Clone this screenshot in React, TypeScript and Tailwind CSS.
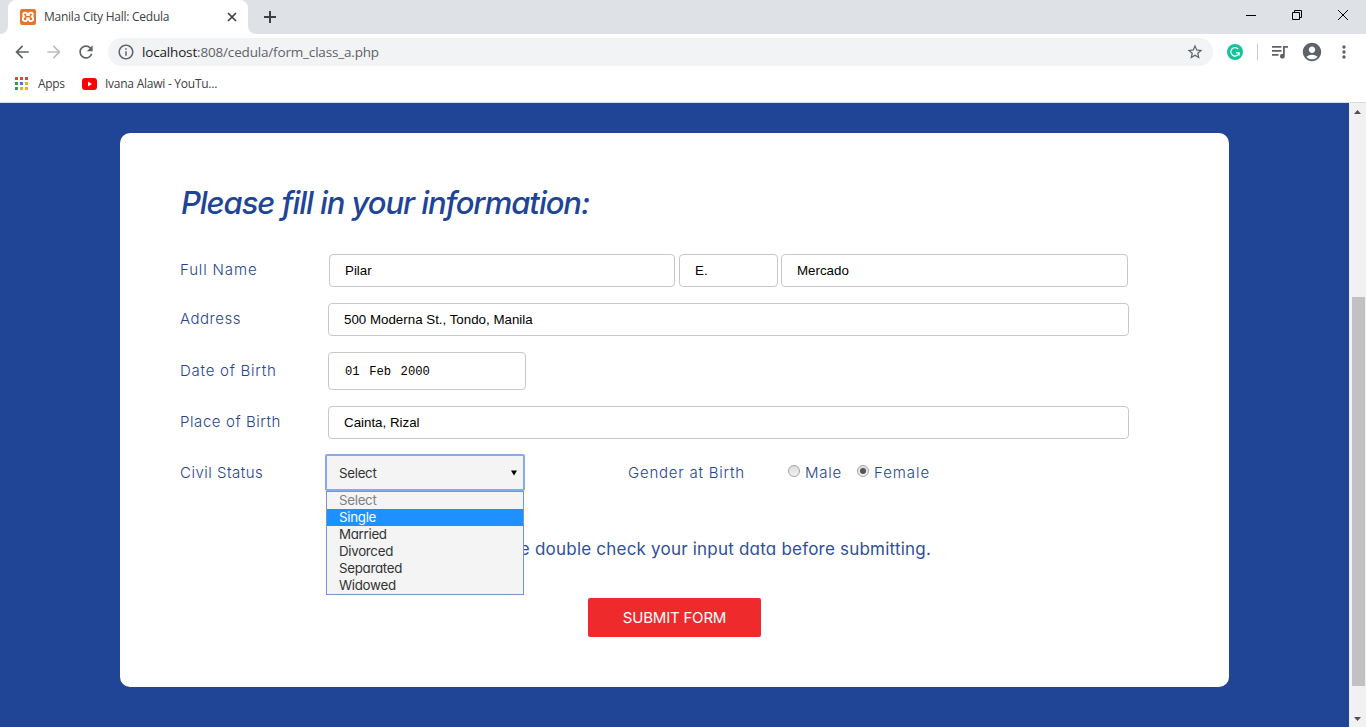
import React from "react";
import {
  MdArrowBack,
  MdArrowForward,
  MdRefresh,
  MdInfoOutline,
  MdStarBorder,
  MdAccountCircle,
  MdMoreVert,
} from "react-icons/md";

const chromeFont = "font-['Open_Sans','Noto_Sans',sans-serif]";
const formFont = "font-['Inter',sans-serif]";
const roundFont = "font-['Inter',sans-serif] [font-feature-settings:'cv11']";

function XamppIcon() {
  return (
    <svg width="16" height="16" viewBox="0 0 16 16">
      <rect width="16" height="16" rx="2" fill="#e2762c" />
      <g fill="none" stroke="#fff" strokeWidth="1.8">
        <path d="M5.2 7.7a2 2 0 1 1 2-2.1v.6h1.6v-.6a2 2 0 1 1 2 2.1 2.2 2.2 0 1 1-2 2.4v-.7H7.2v.7a2.2 2.2 0 1 1-2-2.4Z" />
      </g>
    </svg>
  );
}

function TabStrip() {
  return (
    <div className="flex h-[34px] bg-[#dee1e6]">
      <div className="w-2 bg-white">
        <div className="h-full rounded-br-lg bg-[#dee1e6]" />
      </div>
      <div className="flex w-[240px] items-center rounded-t-lg bg-white pl-3 pr-[11px]">
        <XamppIcon />
        <span className="ml-2 flex-1 whitespace-nowrap text-[12px] tracking-[-0.25px] text-[#3c4043]">
          Manila City Hall: Cedula
        </span>
        <svg width="10" height="10" viewBox="0 0 10 10" stroke="#3c4043" strokeWidth="1.7">
          <path d="M1 1l8 8M9 1L1 9" />
        </svg>
      </div>
      <div className="w-2 bg-white">
        <div className="h-full rounded-bl-lg bg-[#dee1e6]" />
      </div>
      <div className="flex items-center pl-2">
        <svg width="12" height="12" viewBox="0 0 12 12" stroke="#3c4043" strokeWidth="2">
          <path d="M6 0v12M0 6h12" />
        </svg>
      </div>
      <div className="flex flex-1 items-center justify-end gap-9 pb-[5px] pr-[18px]">
        <svg width="10" height="10" viewBox="0 0 10 10" stroke="#000">
          <path d="M0 5.5h10" />
        </svg>
        <svg width="10" height="10" viewBox="0 0 10 10" stroke="#000" fill="none">
          <path d="M.5 2.5h7v7h-7zM2.5 2.500V.5h7v7h-2" />
        </svg>
        <svg width="10" height="10" viewBox="0 0 10 10" stroke="#000">
          <path d="M0 0l10 10M10 0L0 10" />
        </svg>
      </div>
    </div>
  );
}

function Toolbar() {
  return (
    <div className="flex h-9 items-center bg-white pl-3 text-[#5f6368]">
      <MdArrowBack size={20} />
      <MdArrowForward size={20} className="ml-3 text-[#bbbdbf]" />
      <MdRefresh size={20} className="ml-3" />
      <div className="ml-3 flex h-7 w-[1105px] items-center rounded-full bg-[#f1f3f4] pl-[9px] pr-[9px]">
        <MdInfoOutline size={18} />
        <span className="ml-[7px] flex-1 whitespace-nowrap text-[13.5px] tracking-[-0.17px] text-[#5f6368]">
          <span className="text-[#202124]">localhost</span>:808/cedula/form_class_a.php
        </span>
        <MdStarBorder size={18} />
      </div>
      <svg className="ml-[14px]" width="16" height="16" viewBox="0 0 16 16" fill="none">
        <circle cx="8" cy="8" r="8" fill="#15c39a" />
        <path
          d="M11.300 5.200A4.200 4.200 0 1 0 12.100 8.900H8.900M12.100 8.500v3"
          stroke="#fff"
          strokeWidth="1.300"
        />
      </svg>
      <div className="ml-[14px] h-4 w-px bg-[#c8cacd]" />
      <svg className="ml-[14px]" width="16" height="13" viewBox="0 0 16 13" fill="currentColor">
        <path d="M0 0h9.500v1.700H0zM0 4h9.500v1.700H0zM0 8h6.500v1.700H0z" />
        <path d="M11 0h5v1.800h-3.200v8.400a2.400 2.400 0 1 1-1.800-2.300z" />
      </svg>
      <MdAccountCircle size={22} className="ml-[13px]" />
      <MdMoreVert size={20} className="ml-[11px]" />
    </div>
  );
}

const appDots = [
  "bg-[#d8473b]", "bg-[#d8473b]", "bg-[#d8473b]",
  "bg-[#2e9b57]", "bg-[#3b7de0]", "bg-[#e6b02e]",
  "bg-[#2e9b57]", "bg-[#e6b02e]", "bg-[#e6b02e]",
];

function Bookmarks() {
  return (
    <div className="flex h-8 items-center bg-white pb-1 pl-[15px] text-[12px] text-[#3c4043]">
      <div className="grid grid-cols-3 gap-[2px] pb-px">
        {appDots.map((c, i) => (
          <div key={i} className={"h-[3px] w-[3px] " + c} />
        ))}
      </div>
      <span className="ml-[10px] w-[44px] tracking-[-0.3px]">Apps</span>
      <svg width="15" height="12" viewBox="0 0 15 12">
        <rect width="15" height="12" rx="3" fill="#f00" />
        <path d="M6 3.500v5L10 6z" fill="#fff" />
      </svg>
      <span className="ml-2 whitespace-nowrap tracking-[-0.25px]">Ivana Alawi - YouTu...</span>
    </div>
  );
}

function Label({ children, className = "" }: { children: React.ReactNode; className?: string }) {
  return (
    <span className={"shrink-0 whitespace-nowrap text-[15px] font-light text-[#26468f] " + className}>
      {children}
    </span>
  );
}

function Field({ value, className }: { value: string; className: string }) {
  return (
    <div
      className={
        "flex items-center rounded-[4px] border border-[#c8c8c8] bg-white pl-[15px] font-['Liberation_Sans',sans-serif] text-[13.333px] text-black " +
        className
      }
    >
      {value}
    </div>
  );
}

function Radio({ checked = false }: { checked?: boolean }) {
  return (
    <div className="mb-[3px] flex h-3 w-3 items-center justify-center rounded-full border border-[#a5a5a5] bg-linear-to-b from-[#dcdcdc] to-[#f2f2f2]">
      {checked && <div className="h-[6px] w-[6px] rounded-full bg-[#555]" />}
    </div>
  );
}

const options = ["Select", "Single", "Married", "Divorced", "Separated", "Widowed"];

function CivilStatus() {
  return (
    <div className={"relative h-[37px] w-[200px] tracking-[-0.3px] " + roundFont}>
      <div className="flex h-full items-center justify-between rounded-[2px] border-2 border-[#87abea] bg-[#f4f4f4] pl-3 pr-[6px] text-[13.333px] text-[#333]">
        <span className="pt-[2px]">Select</span>
        <svg width="6" height="6" viewBox="0 0 7 6">
          <path d="M0 0h7L3.500 6z" fill="#000" />
        </svg>
      </div>
      <div className="absolute left-[1px] top-[37px] z-10 w-[198px] border border-[#7395d0] bg-[#f4f4f4] text-[13.333px] leading-[17px]">
        {options.map((o, i) => (
          <div
            key={o}
            className={
              "h-[17px] pl-3 " +
              (i === 0 ? "text-[#808080]" : i === 1 ? "bg-[#1e90ff] text-white" : "text-[#333]")
            }
          >
            {o}
          </div>
        ))}
      </div>
    </div>
  );
}

function Form() {
  return (
    <div className={"h-[554px] w-[1109px] rounded-[10px] bg-white pl-[60px] pt-[46px] " + formFont}>
      <h1 className={"h-[48px] whitespace-nowrap pl-px text-[31px] font-medium italic leading-[48px] tracking-[-1.05px] text-[#204496] " + roundFont}>
        Please fill in your information:
      </h1>
      <div className="mt-[27px] flex h-[33px] items-center">
        <Label className="w-[149px] tracking-[0.85px]">Full Name</Label>
        <Field value="Pilar" className="h-[33px] w-[346px]" />
        <Field value="E." className="ml-1 h-[33px] w-[99px]" />
        <Field value="Mercado" className="ml-[3px] h-[33px] w-[347px]" />
      </div>
      <div className="mt-4 flex h-[33px] items-center">
        <Label className="w-[148px] tracking-[0.5px]">Address</Label>
        <Field value="500 Moderna St., Tondo, Manila" className="h-[33px] w-[801px]" />
      </div>
      <div className="mt-4 flex h-[38px] items-center">
        <Label className="w-[148px] tracking-[0.75px]">Date of Birth</Label>
        <div className="flex h-[38px] w-[198px] items-center gap-[9.500px] rounded-[4px] border border-[#c8c8c8] pl-4 pt-[3px] font-['Liberation_Mono',monospace] text-[12.200px] text-black">
          <span>01</span>
          <span>Feb</span>
          <span>2000</span>
        </div>
      </div>
      <div className="mt-4 flex h-[33px] items-center">
        <Label className="w-[148px] tracking-[0.58px]">Place of Birth</Label>
        <Field value="Cainta, Rizal" className="h-[33px] w-[801px]" />
      </div>
      <div className="mt-[15px] flex h-[37px] items-center">
        <Label className="w-[145px] pt-px tracking-[0.5px]">Civil Status</Label>
        <CivilStatus />
        <Label className="ml-[103px] w-[160px] pt-px tracking-[0.78px]">Gender at Birth</Label>
        <Radio />
        <Label className="ml-[5px] w-[52px] pt-px tracking-[0.75px]">Male</Label>
        <Radio checked />
        <Label className="ml-[5px] pt-px tracking-[0.95px]">Female</Label>
      </div>
      <p className={"mt-[45px] w-[751px] text-right text-[17px] leading-[26px] tracking-[0.21px] text-[#2f4f9b] " + roundFont}>
        Please double check your input data before submitting.
      </p>
      <div className={"ml-[408px] mt-[36px] flex h-[39px] w-[173px] items-center justify-center rounded-[2px] bg-[#ee2a2c] pt-px text-[15px] tracking-[-0.2px] text-white " + roundFont}>
        SUBMIT FORM
      </div>
    </div>
  );
}

function Scrollbar() {
  return (
    <div className="flex w-[17px] flex-col items-center bg-[#f1f1f1]">
      <svg className="mt-[7px]" width="7" height="4" viewBox="0 0 7 4">
        <path d="M0 4h7L3.500 0z" fill="#505050" />
      </svg>
      <div className="ml-px mt-[183px] h-[389px] w-[13px] bg-[#c1c1c1]" />
      <svg className="mt-[31px]" width="7" height="4" viewBox="0 0 7 4">
        <path d="M0 0h7L3.500 4z" fill="#505050" />
      </svg>
    </div>
  );
}

export default function App() {
  return (
    <div className="flex h-[727px] w-[1366px] flex-col overflow-hidden bg-white">
      <div className={chromeFont}>
        <TabStrip />
        <Toolbar />
        <Bookmarks />
        <div className="h-px bg-[#d5dcea]" />
      </div>
      <div className="flex flex-1">
        <div className="flex-1 bg-[#204496] pl-[120px] pt-[30px]">
          <Form />
        </div>
        <Scrollbar />
      </div>
    </div>
  );
}
